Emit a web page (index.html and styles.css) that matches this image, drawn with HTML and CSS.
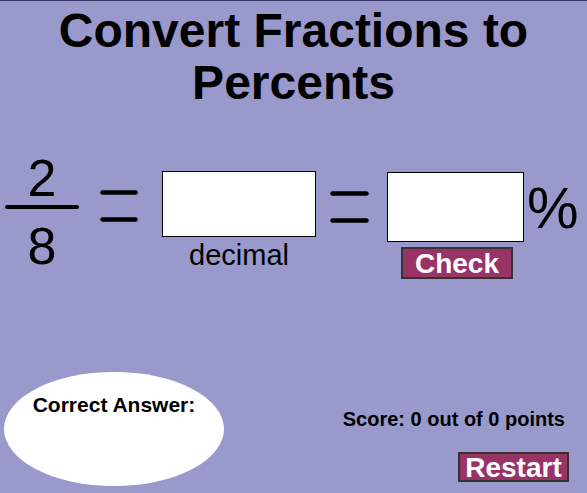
FILE: index.html
```html
<!DOCTYPE html>
<html>
<head>
<meta charset="utf-8">
<title>Convert Fractions to Percents</title>
<link rel="stylesheet" href="styles.css">
</head>
<body>
<div class="page">
  <h1 class="title">Convert Fractions to<br>Percents</h1>

  <div class="equation">
    <div class="fraction">
      <div class="digit">2</div>
      <div class="bar"></div>
      <div class="digit den">8</div>
    </div>

    <svg class="equals eq1" width="38" height="34" viewBox="0 0 38 34">
      <line x1="2.5" y1="2.5" x2="35.5" y2="2.5" />
      <line x1="2.5" y1="29.5" x2="35.5" y2="29.5" />
    </svg>

    <div class="field-col decimal-col">
      <div class="answer-box box-decimal"></div>
      <div class="field-label">decimal</div>
    </div>

    <svg class="equals eq2" width="39" height="34" viewBox="0 0 39 34">
      <line x1="2.5" y1="2.5" x2="36.5" y2="2.5" />
      <line x1="2.5" y1="29.5" x2="36.5" y2="29.5" />
    </svg>

    <div class="field-col percent-col">
      <div class="answer-box box-percent"></div>
      <div class="btn btn-check">Check</div>
    </div>

    <div class="percent-sign">%</div>
  </div>

  <div class="bottom">
    <div class="answer-oval">
      <div class="oval-label">Correct Answer:</div>
    </div>
    <div class="score-col">
      <div class="score">Score: 0 out of 0 points</div>
      <div class="btn btn-restart">Restart</div>
    </div>
  </div>
</div>
</body>
</html>
```

FILE: styles.css
```css
html, body {
  margin: 0;
  padding: 0;
  background: #9999cc;
}

body {
  font-family: "Liberation Sans", Arial, Helvetica, sans-serif;
  color: #000;
}

.page {
  width: 587px;
  height: 493px;
  box-sizing: border-box;
  border-top: 1px solid #333366;
  overflow: hidden;
}

.title {
  margin: 4px 0 0 0;
  font-size: 48px;
  font-weight: bold;
  line-height: 52px;
  text-align: center;
}

.equation {
  display: flex;
  align-items: flex-start;
  margin-top: 43px;
  padding-left: 5px;
}

.fraction {
  width: 74px;
  display: flex;
  flex-direction: column;
  align-items: center;
}

.digit {
  font-size: 52px;
  line-height: 52px;
  height: 52px;
}

.bar {
  width: 74px;
  height: 4px;
  border-radius: 2px;
  background: #000;
  margin-top: 1px;
}

.den {
  margin-top: 11px;
}

.equals line {
  stroke: #000;
  stroke-width: 4.5;
  stroke-linecap: round;
}

.eq1 {
  margin-left: 21px;
  margin-top: 38px;
}

.eq2 {
  margin-left: 14px;
  margin-top: 39px;
}

.field-col {
  display: flex;
  flex-direction: column;
  align-items: center;
}

.decimal-col {
  margin-left: 24px;
  margin-top: 19px;
}

.percent-col {
  margin-left: 18px;
  margin-top: 20px;
}

.answer-box {
  background: #fff;
  border: 1px solid #000;
  box-sizing: border-box;
}

.box-decimal {
  width: 154px;
  height: 66px;
}

.box-percent {
  width: 137px;
  height: 70px;
}

.field-label {
  margin-top: 1px;
  font-size: 29px;
  line-height: 34px;
}

.btn {
  background: #993366;
  border: 2px solid #333333;
  box-sizing: border-box;
  color: #fff;
  font-weight: bold;
  font-size: 28px;
  line-height: 28px;
  display: flex;
  justify-content: center;
  align-items: flex-start;
}

.btn-check {
  width: 112px;
  height: 32px;
  margin-top: 5px;
  padding-top: 1px;
  margin-left: 3px;
}

.percent-sign {
  font-size: 58px;
  line-height: 58px;
  margin-left: 3px;
  margin-top: 27px;
}

.bottom {
  display: flex;
  justify-content: space-between;
  align-items: flex-start;
  margin-top: 93px;
}

.answer-oval {
  width: 220px;
  height: 114px;
  margin-left: 4px;
  border-radius: 50%;
  background: #fff;
  box-sizing: border-box;
  padding-top: 21px;
  text-align: center;
}

.oval-label {
  font-size: 21px;
  font-weight: bold;
  line-height: 23px;
}

.score-col {
  display: flex;
  flex-direction: column;
  align-items: flex-end;
  padding-right: 18px;
}

.score {
  margin-top: 36px;
  margin-right: 4px;
  font-size: 20px;
  font-weight: bold;
  line-height: 23px;
  white-space: nowrap;
}

.btn-restart {
  width: 111px;
  height: 30px;
  margin-top: 21px;
  margin-right: 0;
  padding-top: 0;
}
```
